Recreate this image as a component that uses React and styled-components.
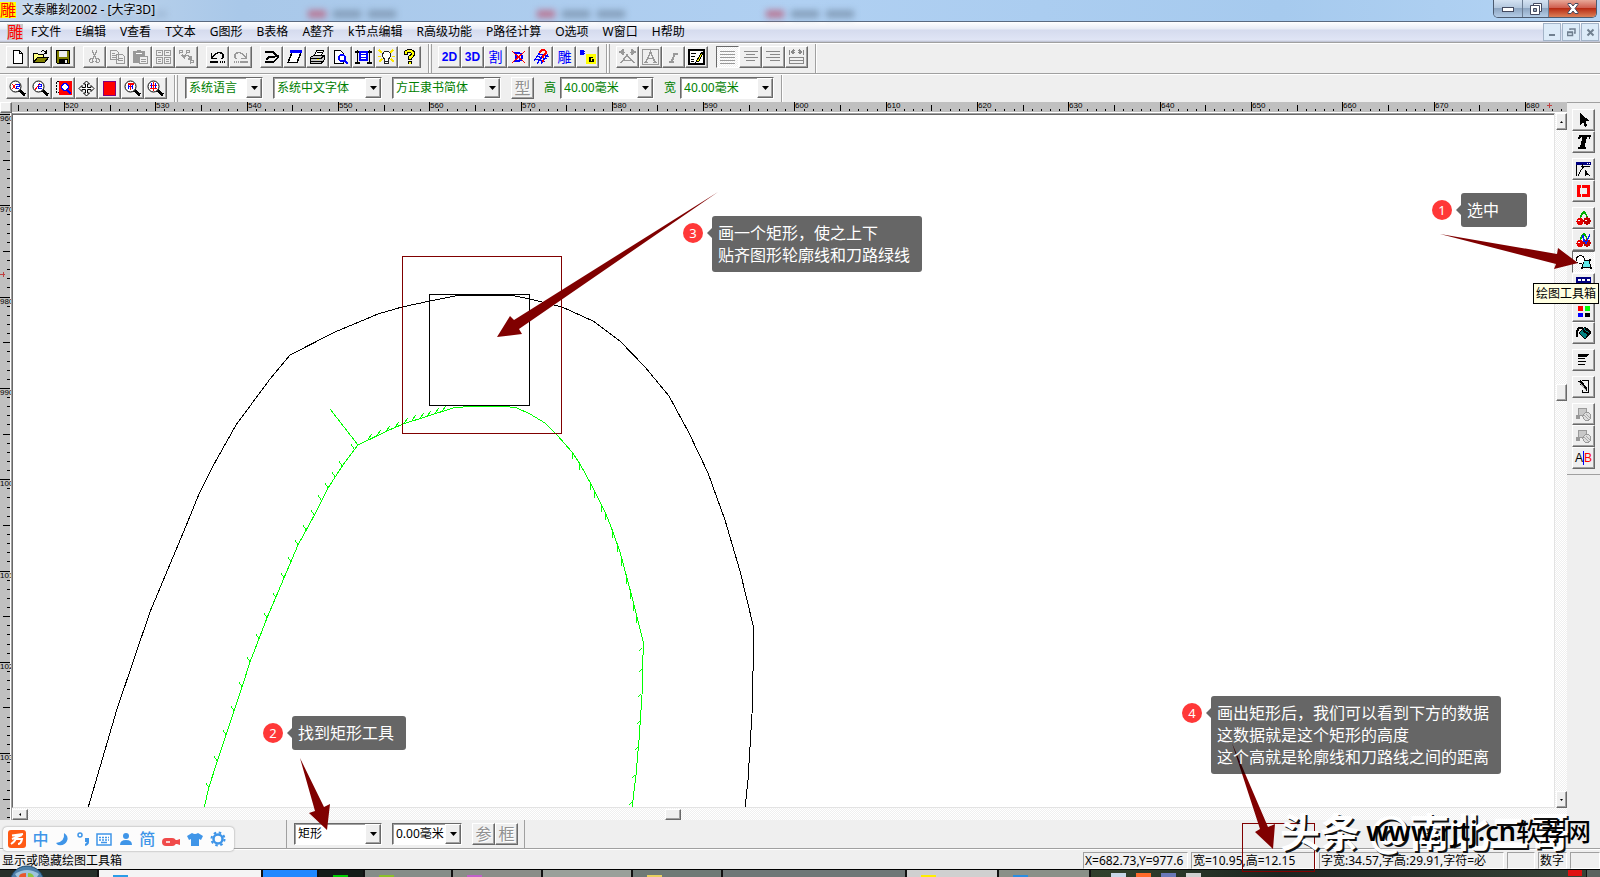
import React from "react";
import styled, { createGlobalStyle, css } from "styled-components";

const UI_FONT = `"Noto Sans", "Noto Sans CJK SC", sans-serif`;
const MAROON = "#800000";
const GREEN = "#00ff00";

const MENUS = [
  "F文件",
  "E编辑",
  "V查看",
  "T文本",
  "G图形",
  "B表格",
  "A整齐",
  "k节点编辑",
  "R高级功能",
  "P路径计算",
  "O选项",
  "W窗口",
  "H帮助",
];

const MAIN_TOOLS = [
  [
    ["new", "open", "save"],
    ["cut", "copy", "paste", "tiles", "chain"],
    ["undo", "redo"],
    ["fold", "slant", "print", "preview", "frame", "bulb", "help"],
  ],
  [["t:2D", "t:3D", "t:割", "cross", "weave", "t:雕", "bg"]],
  [
    ["kern", "boxA", "italic", "edit"],
    ["left", "center", "right", "justify"],
  ],
];

const ZOOM_TOOLS = ["zoomX", "zoom2", "zoomSel", "move", "redBox", "zoomPage", "zoomAll"];

const RAIL_TOOLS = [
  ["cursor", "type"],
  ["node", "redFrame"],
  ["cherry", "cherryPen", "shapes", "table"],
  ["colors", "bucket"],
  ["lines"],
  ["door"],
  ["stack", "stack", "ab"],
];

const TITLES = {
  new: "新建",
  open: "打开",
  save: "保存",
  cut: "剪切",
  copy: "复制",
  paste: "粘贴",
  undo: "撤消",
  redo: "重做",
  print: "打印",
  preview: "打印预览",
  help: "帮助",
  shapes: "绘图工具箱",
};

const PRESSED = ["left", "shapes"];

function Lens({ children }) {
  return (
    <>
      <path d="M10 10l6 5" stroke="#000" strokeWidth="3" />
      <circle
        cx="6.500"
        cy="6.500"
        r="5.500"
        fill="#fff"
        stroke="#000"
        shapeRendering="geometricPrecision"
      />
      {children}
    </>
  );
}

function Cherries() {
  return (
    <>
      <path d="M5 10Q6 4 9 2Q12 4 12 9M9 2L7 4" fill="none" stroke="#00b000" strokeWidth="1.600" />
      <circle cx="5" cy="11.500" r="3.600" fill="#e60000" />
      <circle cx="12" cy="11" r="3.600" fill="#c00000" />
      <path d="M3 10.500h2M10 10.500h2" stroke="#fff" />
    </>
  );
}

const ICONS = {
  new: <path d="M4.500 1.500h6l3 3v10h-9zM10.500 1.500v3h3" fill="#fff" stroke="#000" />,
  open: (
    <>
      <path d="M1.500 13.500v-9h4l1 1h5v3" fill="#ffff80" stroke="#000" />
      <path d="M1.500 13.500l4-5h11l-4 5z" fill="#808000" stroke="#000" />
      <path d="M9 3q3-3 5 1M14.500 1v3h-3" fill="none" stroke="#000" />
    </>
  ),
  save: (
    <>
      <path d="M1.500 1.500h13v13h-12l-1-1z" fill="#808000" stroke="#000" />
      <path d="M4 2h8v6H4z" fill="#efefef" />
      <path d="M4 10h9v5H4z" fill="#000" />
      <path d="M10 11h2v3h-2z" fill="#efefef" />
    </>
  ),
  cut: (
    <path
      d="M6 1l4 9M11 1l-4 9M6.500 10a2 2 0 1 0 .5 3zM10.500 10a2 2 0 1 1-.5 3z"
      fill="none"
      stroke="#999"
      strokeWidth="1.200"
    />
  ),
  copy: (
    <path
      d="M1.500 1.500h6l2 2v7h-8zM3 4.500h3M3 6.500h5M3 8.500h5M7.500 5.500h6l2 2v7h-8zM9 9.500h5M9 11.500h5"
      fill="#efefef"
      stroke="#999"
    />
  ),
  paste: (
    <>
      <path d="M1 2h4V1h4v1h4v12H1z" fill="#999" />
      <path d="M4 4.500h6M7.500 7.500h8v7h-8zM9 10.500h5M9 12.500h5" fill="#efefef" stroke="#fff" />
      <path d="M7.500 7.500h8v7h-8zM9 10.500h5M9 12.500h5" fill="none" stroke="#999" />
    </>
  ),
  tiles: (
    <path
      d="M1.500 1.500h6v5h-6zM9.500 1.500h6v5h-6zM1.500 8.500h6v6h-6zM9.500 8.500h6v6h-6zM3 3.500h3M11 3.500h3M3 10.500h3M11 10.500h3M3 12.500h3M11 12.500h3"
      fill="#efefef"
      stroke="#999"
    />
  ),
  chain: (
    <path
      d="M1.500 5V1.500h3v2h-3M8.500 5V1.500h3v2h-3M12.500 15v-3.500h3v2h-3M4 6l2 2 2-2M10 6l3 4M13 7v3h-3M6.500 8v2"
      fill="none"
      stroke="#999"
      strokeWidth="1.500"
    />
  ),
  undo: (
    <>
      <path d="M2.500 4v5.500H8M3 9q5-7 9-5t1 6" fill="none" stroke="#000" strokeWidth="1.500" />
      <path d="M1 13h8M11 13h1M13 13h1M15 13h1" stroke="#000" strokeWidth="2" />
    </>
  ),
  redo: (
    <>
      <path d="M14.500 4v5.500H9M14 9Q9 2 5 4t-1 6" fill="none" stroke="#999" strokeWidth="1.500" />
      <path d="M8 13h8M6 13h1M4 13h1M2 13h1" stroke="#999" strokeWidth="2" />
    </>
  ),
  fold: (
    <>
      <path d="M2 3h8l4 3.500-3 1.500H6l-3 3" fill="none" stroke="#000" strokeWidth="2" />
      <path d="M2 12.500h9l3.500-3.500V7" fill="none" stroke="#000" strokeWidth="2" />
    </>
  ),
  slant: (
    <>
      <path d="M6 3.500h9l-4 10H2z" fill="#fff" stroke="#000" strokeWidth="1.500" />
      <path d="M4 1h12v3H4z" fill="#00f" />
    </>
  ),
  print: (
    <>
      <path d="M5.500 6.500l2-5h7l-2 5z" fill="#fff" stroke="#000" />
      <path d="M1.500 8.500l3-2h11v4l-3 4h-11z" fill="#c8c8c8" stroke="#000" />
      <path d="M2 9.500h10l3-3M2 12.500h10v2M8 3.500h5" fill="none" stroke="#000" />
      <path d="M8 10.500h2" stroke="#ff0" />
    </>
  ),
  preview: (
    <>
      <path d="M2.500 1.500h6l3 3v10h-9z" fill="#fff" stroke="#000" />
      <circle cx="10" cy="9" r="3" fill="#fff" stroke="#00f" strokeWidth="1.500" />
      <path d="M12 11l4 4" stroke="#00f" strokeWidth="2" />
    </>
  ),
  frame: (
    <>
      <path d="M0 3h17M2.500 1v14M14.500 1v14M0 14h5M12 14h5" stroke="#000" strokeWidth="1.500" />
      <path d="M5 3h7v8H5z" fill="#fff" stroke="#00f" strokeWidth="1.500" />
      <path d="M5 5.500h7M5 8.500h7" stroke="#00f" />
    </>
  ),
  bulb: (
    <>
      <path
        d="M1 1l3 3M15 1l-3 3M0 7.500h3M14 7.500h3M1 13l3-3M16 13l-3-3"
        stroke="#ffe800"
        strokeWidth="1.500"
      />
      <path d="M6.500 10Q4 8 4.500 5.500Q6 2 8.500 2Q12 2 12.500 6Q12 9 10.500 10v4h-4z" fill="#fff" stroke="#222" />
      <path d="M6 12.500h5" stroke="#222" />
    </>
  ),
  help: (
    <>
      <path
        d="M5 6V4q0-2 3.500-2t3.500 2.500Q12 7 8.500 8.500V11M8.500 12v3"
        fill="none"
        stroke="#000"
        strokeWidth="4"
      />
      <path
        d="M5 5V4q0-2 3.500-2t3.500 2.500Q12 7 8.500 8.500V10M8.500 13v1.500"
        fill="none"
        stroke="#ff0"
        strokeWidth="2"
      />
    </>
  ),
  cross: (
    <>
      <path d="M6 4h3q3 1 3 4t-3 4H6zM4 4h3M4 12h3" fill="none" stroke="#00f" strokeWidth="2" />
      <path d="M2 2l13 12M15 2L2 14" stroke="#f00" />
    </>
  ),
  weave: (
    <>
      <path
        d="M1 12l6-9M4 15l7-10M8 15l7-10M3 7l11 3M2 10l10 3M6 5l10 3"
        fill="none"
        stroke="#00f"
        strokeWidth="1.200"
      />
      <path d="M7 4q0-3 3-3t3 3l-3 3v2M10 11v2" fill="none" stroke="#f00" strokeWidth="2" />
    </>
  ),
  bg: (
    <>
      <path d="M7 5h10v10H7z" fill="#ff0" />
      <path d="M1 1h4v1h1v1H5v1h1v1H5v1H1z" fill="#00f" />
      <path d="M14 8.500h-3v4h3v-2h-1" fill="none" stroke="#000" strokeWidth="1.500" />
    </>
  ),
  kern: (
    <path
      d="M1 3l3-2v4zM16 3l-3-2v4zM4 3.500h2M11 3.500h2M2 14l6-8 7 8M5 11.500h7"
      fill="none"
      stroke="#999"
      strokeWidth="1.500"
    />
  ),
  boxA: (
    <>
      <path d="M.5.5h16v15H.5z" fill="none" stroke="#999" />
      <path
        d="M4 13L8.500 3 13 13M5.500 9.500h6M2 13.500h4M11 13.500h4"
        fill="none"
        stroke="#999"
        strokeWidth="1.500"
      />
    </>
  ),
  italic: <path d="M10 4l-3 8M8 4.500h5M4 12.500h5" fill="none" stroke="#999" strokeWidth="2" />,
  edit: (
    <>
      <path d="M1 1h15v14H1z" fill="#fff" stroke="#000" strokeWidth="2" />
      <path d="M3 4.500h5M3 7.500h4M3 10.500h3M3 12.500h3" stroke="#000" />
      <path d="M14 3l-5 8-1 2 3-1 4-8z" fill="#ff0" stroke="#000" />
    </>
  ),
  left: <path d="M1 2.500h15M1 5.500h15M1 8.500h15M1 11.500h15M1 14.500h15" stroke="#999" />,
  center: <path d="M2 2.500h14M4 5.500h9M2 8.500h14M4 11.500h9" stroke="#888" />,
  right: <path d="M1 2.500h14M5 5.500h10M1 8.500h14M5 11.500h10" stroke="#888" />,
  justify: (
    <path
      d="M1.500 1v5M15.500 1v5M4 3.500h3M10 3.500h3M6 1L4 3l2 2M11 1l2 2-2 2M1 8.500h15M1 11.500h15M1 14.500h15M1.500 8v7M15.500 8v7"
      fill="none"
      stroke="#888"
      strokeWidth="1.500"
    />
  ),
  zoomX: (
    <Lens>
      <path d="M3 4l4 5M7 4L3 9" stroke="#f00" />
      <path d="M7 4.500h3v2H7.500v2H10" fill="none" stroke="#00f" />
    </Lens>
  ),
  zoom2: (
    <Lens>
      <path d="M3 10l5-7" stroke="#f00" />
      <path d="M6 4.500h3.500v2H6.500v2H10" fill="none" stroke="#00f" />
    </Lens>
  ),
  zoomSel: (
    <>
      <path d="M4 1h13v14H4z" fill="#f00" />
      <path d="M4 1.500H1.500v11H4" fill="none" stroke="#000" strokeDasharray="2 1" />
      <circle cx="10" cy="7" r="3.500" fill="#fff" stroke="#00f" strokeWidth="1.500" />
      <path d="M12 10l4 4" stroke="#00f" strokeWidth="2" />
    </>
  ),
  move: (
    <path
      d="M8.500 1l3 3h-2v3.500h3.500v-2l3 3-3 3v-2H9.500V13h2l-3 3-3-3h2V9.500H4v2l-3-3 3-3v2h3.500V4h-2z"
      fill="#fff"
      stroke="#000"
      shapeRendering="geometricPrecision"
    />
  ),
  redBox: <path d="M2.500 1.500h12v14h-12z" fill="#f00" stroke="#800080" />,
  zoomPage: (
    <Lens>
      <path d="M3.500 4h6" stroke="#f00" strokeWidth="2" />
      <path d="M4.500 5v4M8.500 5v4M4 6.500h5" stroke="#00f" />
      <path d="M6.500 3v7" stroke="#f00" />
    </Lens>
  ),
  zoomAll: (
    <Lens>
      <path d="M6.500 2v9M3 5.500h7M3 8.500h7" stroke="#f00" />
      <path d="M4.500 3v5M8.500 3v5" stroke="#00f" />
    </Lens>
  ),
  cursor: <path d="M5 1v12l3-3 2 5 2.500-1-2-5h4z" fill="#000" />,
  type: <path d="M4 1h12l-1 4h-1l-.5-2H12L9.500 13H11v2H3v-2h2L7.500 3H6L4 5H3z" fill="#000" />,
  node: (
    <>
      <path d="M1 1h15v3H1z" fill="#000080" />
      <path d="M12 2.500h1M14 2.500h1" stroke="#fff" />
      <path d="M1.500 4v11M3 15Q6 8 9 6M6 5.500h9M7.500 3v5" fill="none" stroke="#000" />
      <path d="M10 8v7l2-1.500 3 1.500z" fill="#000" />
    </>
  ),
  redFrame: (
    <path d="M2 2h3v12H2zM7 2h8v12H7v-3h5V5H7zM5 2h1v3H5zM5 11h1v3H5z" fill="#f00" />
  ),
  cherry: <Cherries />,
  cherryPen: (
    <>
      <Cherries />
      <path d="M7 3l4 9 4-10M8.500 10V3" fill="none" stroke="#0020ff" strokeWidth="1.300" />
    </>
  ),
  shapes: (
    <>
      <path d="M8.500 6.500h6l1 7h-8z" fill="#60e8e8" stroke="#000" />
      <circle cx="5.500" cy="5.500" r="4" fill="#fff" stroke="#000" />
      <path d="M14 5h2v2h-2zM6 13h2v2H6zM15 13h2v2h-2z" fill="#000" />
    </>
  ),
  table: (
    <>
      <path d="M1 1h15v6H1z" fill="#000080" />
      <path d="M2.500 4h3M7 4h3M11.500 4h3" stroke="#fff" strokeWidth="2" />
      <path d="M1.500 7v7h14V7M6.500 7v7M11.500 7v7M1 10.500h15" fill="none" stroke="#000080" />
    </>
  ),
  colors: (
    <>
      <path d="M3 3h5v5H3z" fill="#f00" />
      <path d="M10 3h5v5h-5z" fill="#0f0" />
      <path d="M3 10h5v4H3z" fill="#00f" />
      <path d="M10 10h5v4h-5z" fill="#000" />
    </>
  ),
  bucket: (
    <>
      <path d="M10 2l6 5-6 7-6-6z" fill="#008080" stroke="#000" />
      <path d="M10 3l6 5M8 5l6 5" stroke="#000" strokeWidth="2" />
      <path d="M8 3H4L2 6v6" fill="none" stroke="#000" strokeWidth="2" />
    </>
  ),
  lines: (
    <>
      <path d="M3 2h11l-2 3H3z" fill="#000" />
      <path d="M3 6.500h7M3 9.500h8M3 12.500h7" stroke="#000" />
    </>
  ),
  door: (
    <>
      <path d="M7 1.500h6.500v12H7V11" fill="none" stroke="#000" />
      <path d="M3 2l3-1 6 8v3l-5-4z" fill="#000" />
      <path d="M4 3l7 8" stroke="#aaa" />
    </>
  ),
  stack: (
    <>
      <path d="M3.500 2.500h8v7h-8z" fill="#c8c8c8" stroke="#999" />
      <circle cx="12" cy="10.500" r="4" fill="#dedede" stroke="#999" />
      <path d="M9 9l5 5M11 8l4 4" stroke="#aaa" />
      <path d="M1 9h4v4H1z" fill="#999" />
    </>
  ),
};

function ToolIcon({ name }) {
  if (name.startsWith("t:")) {
    const text = name.slice(2);
    return <Glyph $latin={text.length > 1}>{text}</Glyph>;
  }
  if (name === "ab") {
    return (
      <SplitGlyph>
        <span>A</span>
        <span>B</span>
      </SplitGlyph>
    );
  }
  return (
    <svg width="17" height="16" viewBox="0 0 17 16" shapeRendering="crispEdges" aria-hidden="true">
      {ICONS[name]}
    </svg>
  );
}

function Tool({ name }) {
  return (
    <ToolButton
      type="button"
      aria-label={TITLES[name] || name.replace("t:", "")}
      $pressed={PRESSED.includes(name)}
    >
      <ToolIcon name={name} />
    </ToolButton>
  );
}

function Combo({ label, value, width, green }) {
  return (
    <ComboBox $width={width}>
      <ComboSelect aria-label={label} $green={green} defaultValue={value}>
        <option>{value}</option>
      </ComboSelect>
      <ComboArrow>
        <svg width="7" height="4" viewBox="0 0 7 4" aria-hidden="true">
          <path d="M0 0h7L3.500 4z" fill="#000" />
        </svg>
      </ComboArrow>
    </ComboBox>
  );
}

const UNIT = 9.13;

function HorizontalRuler() {
  const ticks = [];
  for (let n = 515; n < 685; n++) {
    const x = Math.round(52 + (n - 520) * UNIT);
    const top = n % 10 === 0 ? 0 : n % 5 === 0 ? 3 : 7;
    ticks.push(<path key={n} d={`M${x + 0.5} ${top}V9`} stroke="#000" />);
    if (n % 10 === 0) {
      ticks.push(
        <text key={`l${n}`} x={x + 1} y="6">
          {n}
        </text>
      );
    }
  }
  return (
    <RulerSvg aria-hidden="true">
      {ticks}
      <path d="M1537.500 1v5M1535 3.500h5" stroke="#c04040" />
    </RulerSvg>
  );
}

function VerticalRuler() {
  const ticks = [];
  for (let n = 960; n < 1038; n++) {
    const y = Math.round(1 + (n - 960) * UNIT);
    const left = n % 10 === 0 ? 0 : n % 5 === 0 ? 3 : 7;
    ticks.push(<path key={n} d={`M${left} ${y + 0.5}H10`} stroke="#000" />);
    if (n % 10 === 0) {
      ticks.push(
        <text key={`l${n}`} x="0" y={y + 7}>
          {n}
        </text>
      );
    }
  }
  return (
    <RulerSvg aria-hidden="true">
      {ticks}
      <path d="M0 161.500h5M3.500 159v5" stroke="#c04040" />
    </RulerSvg>
  );
}

const OUTLINE =
  "88,808 117,709 150,612 186,526 199,494 213,466 236,425 270,379 290,355 335,332 378,314 402,307 430,301 455,296 478,295 510,295 530,299 562,307 593,321 620,341 645,367 669,396 689,433 708,473 725,520 740,571 754,629 752,714 748,780 745,808";
const TOOLPATH =
  "330,409 358,445 387,431 403,424 425,417 453,408 473,406 502,406 517,408 530,414 545,423 557,435 572,452 580,464 592,486 606,514 613,532 620,552 632,597 638,621 643,641 643,655 642,695 639,740 636,775 632,808";
const TOOLPATH_LEFT =
  "358,445 343,465 328,488 315,514 298,545 284,578 267,618 250,662 243,684 234,711 225,738 217,762 209,787 204,808";

const BARBS_TOP = [
  [368, 439],
  [377, 435],
  [386, 431],
  [395, 427],
  [404, 423],
  [412, 420],
  [420, 418],
  [427, 416],
  [435, 413],
  [442, 411],
];
const BARBS_LEFT = [
  [354, 449],
  [342, 466],
  [335, 477],
  [328, 488],
  [321, 500],
  [314, 515],
  [306, 530],
  [298, 545],
  [291, 562],
  [284, 578],
  [276, 598],
  [267, 618],
  [259, 639],
  [250, 662],
  [242, 687],
  [234, 711],
  [226, 735],
  [217, 761],
  [209, 788],
];
const BARBS_RIGHT = [
  [642, 648],
  [642, 669],
  [641, 694],
  [640, 721],
  [638, 747],
  [635, 775],
  [632, 802],
];
const BARBS_ARC = [
  [573, 453],
  [580, 464],
  [591, 484],
  [595, 492],
  [602, 506],
  [606, 514],
  [613, 532],
  [618, 546],
  [622, 560],
  [627, 578],
  [631, 593],
  [634, 605],
  [637, 617],
];

const barbs = (points, dx, dy) => points.map(([x, y]) => `M${x} ${y}l${dx} ${dy}`).join("");

function Drawing() {
  return (
    <DrawingSvg aria-label="大字3D">
      <g transform="translate(-13 -115)" fill="none" shapeRendering="crispEdges">
        <polyline points={OUTLINE} stroke="#000" />
        <polyline points={TOOLPATH} stroke={GREEN} />
        <polyline points={TOOLPATH_LEFT} stroke={GREEN} />
        <path
          d={
            barbs(BARBS_TOP, 4, -5) +
            barbs(BARBS_LEFT, -3, -5) +
            barbs(BARBS_RIGHT, -3, 3) +
            barbs(BARBS_ARC, -1, 6)
          }
          stroke={GREEN}
        />
        <path d="M429.500 294.500h100v111h-100z" stroke="#000" />
        <path d="M402.500 256.500h159v177h-159z" stroke={MAROON} />
      </g>
    </DrawingSvg>
  );
}

function Note({ number, x, y, lines }) {
  return (
    <NoteRow $x={x} $y={y}>
      <NoteNumber>{number}</NoteNumber>
      <NoteBubble>
        {lines.map((line) => (
          <div key={line}>{line}</div>
        ))}
      </NoteBubble>
    </NoteRow>
  );
}

function ImeBar() {
  return (
    <Ime>
      <svg width="18" height="18" viewBox="0 0 18 18" aria-hidden="true">
        <rect width="18" height="18" rx="3" fill="#ff5a14" />
        <path
          d="M4 5.500l11-1.500M9 5Q8 11 3 14M8 9h6q-1 5-4 5M14 5L4 9"
          fill="none"
          stroke="#fff"
          strokeWidth="2"
        />
      </svg>
      <ImeKey type="button">中</ImeKey>
      <svg width="14" height="18" viewBox="0 0 14 18" aria-hidden="true">
        <path d="M9 3q5 3 3 8t-9 4l-2-2q9-1 8-10z" fill="#3f95e8" />
      </svg>
      <svg width="14" height="18" viewBox="0 0 14 18" aria-hidden="true">
        <circle cx="4" cy="5" r="2" fill="none" stroke="#3f95e8" strokeWidth="1.500" />
        <path d="M9 8h4v4q0 3-4 4v-2l2-2H9z" fill="#3f95e8" />
      </svg>
      <svg width="16" height="18" viewBox="0 0 16 18" aria-hidden="true">
        <path d="M1 4h14v11H1z" fill="#fff" stroke="#3f95e8" strokeWidth="1.500" />
        <path d="M3 7.500h10M3 10h10" stroke="#3f95e8" strokeWidth="1.500" strokeDasharray="2 1" />
        <path d="M5 12.500h6" stroke="#3f95e8" strokeWidth="1.500" />
      </svg>
      <svg width="14" height="18" viewBox="0 0 14 18" aria-hidden="true">
        <circle cx="7" cy="6" r="3" fill="#3f95e8" />
        <path d="M1 15q0-5 6-5t6 5z" fill="#3f95e8" />
      </svg>
      <ImeKey type="button">简</ImeKey>
      <svg width="19" height="18" viewBox="0 0 19 18" aria-hidden="true">
        <rect x="0" y="8" width="14" height="8" rx="4" fill="#f04a4a" />
        <path d="M12 10h3l3-1v6l-3-1h-3z" fill="#f04a4a" />
        <path d="M4 12h4" stroke="#fff" strokeWidth="1.500" />
      </svg>
      <svg width="16" height="18" viewBox="0 0 16 18" aria-hidden="true">
        <path d="M5 3q3 2 6 0l5 3-2 4-2-1v7H4V9L2 10 0 6z" fill="#3f95e8" />
      </svg>
      <svg width="16" height="18" viewBox="0 0 16 18" aria-hidden="true">
        <circle cx="8" cy="9" r="4.500" fill="none" stroke="#3f95e8" strokeWidth="2.500" />
        <circle
          cx="8"
          cy="9"
          r="6.500"
          fill="none"
          stroke="#3f95e8"
          strokeWidth="2"
          strokeDasharray="2.500 2.600"
        />
      </svg>
    </Ime>
  );
}

export default function App() {
  return (
    <Desktop>
      <GlobalStyle />
      <TitleBar>
        <Ghosts aria-hidden="true">
          {[0, 1, 2, 3].map((n) => (
            <Ghost key={n} $faint={n === 0}>
              <i />
              <b />
              <b />
            </Ghost>
          ))}
        </Ghosts>
        <AppMark $bg="#ffff00">雕</AppMark>
        <AppTitle>文泰雕刻2002 - [大字3D]</AppTitle>
        <WindowButtons>
          <WindowButton type="button" aria-label="最小化" $width={29}>
            <svg width="12" height="12" viewBox="0 0 12 12">
              <rect x=".5" y="4.500" width="11" height="4" fill="#fff" stroke="#444a60" />
            </svg>
          </WindowButton>
          <WindowButton type="button" aria-label="还原" $width={26}>
            <svg width="12" height="12" viewBox="0 0 12 12">
              <path d="M3.500.5h8v8h-8z" fill="#fff" stroke="#444a60" />
              <path d="M.5 2.500h9v9h-9z" fill="#fff" stroke="#444a60" />
              <path d="M3.500 5.500h3v3h-3z" fill="#9ab" stroke="#444a60" />
            </svg>
          </WindowButton>
          <WindowButton type="button" aria-label="关闭" $width={47} $close>
            <svg width="12" height="11" viewBox="0 0 12 11">
              <path
                d="M1 .5h3l2 2.500 2-2.500h3v1L8 5.500l3 4v1H8L6 8l-2 2.500H1v-1l3-4-3-4z"
                fill="#fff"
                stroke="#444a60"
              />
            </svg>
          </WindowButton>
        </WindowButtons>
      </TitleBar>

      <MenuBar>
        <AppMark $bg="#c8c8c8">雕</AppMark>
        <MenuList>
          {MENUS.map((item) => (
            <MenuItem key={item} type="button">
              {item}
            </MenuItem>
          ))}
        </MenuList>
        <ChildButtons>
          <ChildButton type="button" aria-label="最小化子窗口">
            <svg width="9" height="9" viewBox="0 0 9 9">
              <path d="M1 7h6" stroke="#708090" strokeWidth="2" />
            </svg>
          </ChildButton>
          <ChildButton type="button" aria-label="还原子窗口">
            <svg width="9" height="9" viewBox="0 0 9 9">
              <path
                d="M3 2V1h5v4H7M.5 4.500h5v3h-5zM0 4h6M3 1h5"
                fill="none"
                stroke="#708090"
                strokeWidth="1.500"
              />
            </svg>
          </ChildButton>
          <ChildButton type="button" aria-label="关闭子窗口">
            <svg width="9" height="9" viewBox="0 0 9 9">
              <path d="M1.500 1.500l6 6M7.500 1.500l-6 6" stroke="#708090" strokeWidth="2" />
            </svg>
          </ChildButton>
        </ChildButtons>
      </MenuBar>

      <Toolbar>
        {MAIN_TOOLS.map((section, i) => (
          <ToolSection key={i}>
            {section.map((group) => (
              <ToolGroup key={group[0]}>
                {group.map((name) => (
                  <Tool key={name} name={name} />
                ))}
              </ToolGroup>
            ))}
          </ToolSection>
        ))}
      </Toolbar>

      <Toolbar $last>
        <ToolSection>
          <ToolGroup>
            {ZOOM_TOOLS.map((name) => (
              <Tool key={name} name={name} />
            ))}
          </ToolGroup>
        </ToolSection>
        <FontSection>
          <Combo label="语言" value="系统语言" width={78} green />
          <Combo label="中文字体" value="系统中文字体" width={109} green />
          <Combo label="西文字体" value="方正隶书简体" width={109} green />
          <ToolButton type="button">
            <Muted>型</Muted>
          </ToolButton>
          <Field>
            高
            <Combo label="高" value="40.00毫米" width={94} green />
          </Field>
          <Field>
            宽
            <Combo label="宽" value="40.00毫米" width={94} green />
          </Field>
        </FontSection>
      </Toolbar>

      <Workspace>
        <Sheet>
          <Corner />
          <TopRuler>
            <HorizontalRuler />
          </TopRuler>
          <SideRuler>
            <VerticalRuler />
          </SideRuler>
          <Canvas>
            <Drawing />
          </Canvas>
          <ScrollColumn>
            <ScrollButton type="button" aria-label="向上" $h={17}>
              <svg width="3" height="2" viewBox="0 0 3 2">
                <path d="M0 2h3L1.500 0z" />
              </svg>
            </ScrollButton>
            <Gap $grow={254} />
            <ScrollThumb $h={17} />
            <Gap $grow={391} />
            <ScrollButton type="button" aria-label="向下" $h={17}>
              <svg width="3" height="2" viewBox="0 0 3 2">
                <path d="M0 0h3L1.500 2z" />
              </svg>
            </ScrollButton>
          </ScrollColumn>
          <ScrollRow>
            <ScrollButton type="button" aria-label="向左" $w={16}>
              <svg width="2" height="3" viewBox="0 0 2 3">
                <path d="M2 0v3L0 1.500z" />
              </svg>
            </ScrollButton>
            <Gap $grow={637} />
            <ScrollThumb $w={16} />
            <Gap $grow={886} />
          </ScrollRow>
        </Sheet>
        <Rail>
          {RAIL_TOOLS.map((group, i) => (
            <RailGroup key={i}>
              {group.map((name, j) => (
                <Tool key={j} name={name} />
              ))}
            </RailGroup>
          ))}
        </Rail>
      </Workspace>

      <ShapeBar>
        <ShapeTools>
          <Combo label="图形" value="矩形" width={88} />
          <Combo label="圆角" value="0.00毫米" width={70} />
          <ToolGroup>
            <ToolButton type="button">
              <Muted>参</Muted>
            </ToolButton>
            <ToolButton type="button">
              <Muted>框</Muted>
            </ToolButton>
          </ToolGroup>
        </ShapeTools>
      </ShapeBar>

      <StatusBar>
        <StatusText>显示或隐藏绘图工具箱</StatusText>
        <StatusCell $width={105}>X=682.73,Y=977.6</StatusCell>
        <StatusCell $width={125}>宽=10.95,高=12.15</StatusCell>
        <StatusCell $width={185}>字宽:34.57,字高:29.91,字符=必</StatusCell>
        <StatusCell $width={28} />
        <StatusCell $width={29}>数字</StatusCell>
        <StatusCell $width={30} />
      </StatusBar>

      <Taskbar>
        <Orb viewBox="0 0 36 12" aria-hidden="true">
          <circle cx="18" cy="18" r="17" fill="#4d7fa8" stroke="#1d4a70" />
          <path d="M6 9q12-8 24 0l-2 3H8z" fill="#9ec3dc" />
          <path d="M10 12q0-4 7-4v4z" fill="#e8582c" />
          <path d="M19 8q5 0 6 4h-6z" fill="#8cc63f" />
        </Orb>
        <Task $width={99} $tone="#26302a" />
        <Task $width={164} $tone="#f4f4f4" $spot="#2a9de8" />
        <Task $width={56} $tone="#2088ff" />
        <Task $width={46} $tone="#141c18" $spot="#00d000" />
        <Task $width={88} $tone="#858d88" $spot="#8ac02a" />
        <Task $width={90} $tone="#8a8d88" $spot="#c060c8" />
        <Task $width={90} $tone="#9aa09a" />
        <Task $width={90} $tone="#6f7a76" $spot="#e8d060" />
        <Task $width={184} $tone="#6f7777" />
        <Task $width={92} $tone="#d0d0d0" $spot="#ffee00" />
        <Task $width={92} $tone="#8a9088" $spot="#2a8de0" />
        <Tray>
          <TraySpot $tone="#c8d8e8" />
          <TraySpot $tone="#ff6a2a" />
          <TraySpot $tone="#6a78b8" />
          <TraySpot $tone="#d0d0d0" />
        </Tray>
        <TrayAlert />
        <ShowDesktop />
      </Taskbar>

      <Overlay>
        <ArrowSvg aria-hidden="true">
          <g fill={MAROON}>
            <path d="M718 192L514 320l-4-4-13 21 25-3-3-5z" />
            <path d="M1440 234l116 30-2 5 24-6-20-15-1 6z" />
            <path d="M300 758l15 53-6 2 18 17 3-26-6 3z" />
            <path d="M1232 743l28 86-5 3 18 17 2-25-7 3z" />
          </g>
          <path
            d="M1242.500 823.500h72v48h-72z"
            fill="none"
            stroke={MAROON}
            shapeRendering="crispEdges"
          />
        </ArrowSvg>
        <Note number={1} x={1432} y={193} lines={["选中"]} />
        <Note number={2} x={263} y={716} lines={["找到矩形工具"]} />
        <Note number={3} x={683} y={216} lines={["画一个矩形，使之上下", "贴齐图形轮廓线和刀路绿线"]} />
        <Note
          number={4}
          x={1182}
          y={696}
          lines={[
            "画出矩形后，我们可以看到下方的数据",
            "这数据就是这个矩形的高度",
            "这个高就是轮廓线和刀路线之间的距离",
          ]}
        />
        <Tooltip role="tooltip">绘图工具箱</Tooltip>
        <ImeBar />
        <AuthorMark>头条 @南北二哥</AuthorMark>
        <SiteMark>
          <b>www.rjtj.cn</b>软荐网
        </SiteMark>
      </Overlay>
    </Desktop>
  );
}

const GlobalStyle = createGlobalStyle`
  * {
    box-sizing: border-box;
  }
  body {
    margin: 0;
    overflow: hidden;
    font-family: ${UI_FONT};
    font-size: 12px;
    line-height: 16px;
    color: #000;
  }
  button, select {
    font: inherit;
    color: inherit;
    margin: 0;
    padding: 0;
  }
  svg {
    display: block;
    flex: none;
  }
`;

const raised = css`
  border: 1px solid;
  border-color: #fff #696969 #696969 #fff;
  box-shadow: inset -1px -1px 0 #a0a0a0;
`;

const dither = css`
  background: repeating-conic-gradient(#efefef 0 25%, #fff 0 50%) 0 0 / 2px 2px;
`;

const Desktop = styled.div`
  position: relative;
  height: 100vh;
  display: flex;
  flex-direction: column;
  background: #efefef;
  overflow: hidden;
`;

const TitleBar = styled.header`
  position: relative;
  flex: none;
  height: 22px;
  display: flex;
  align-items: center;
  gap: 6px;
  padding-bottom: 1px;
  border-bottom: 1px solid #5a6a80;
  background: linear-gradient(90deg, #c6d8ec, #a9c8e9 15%, #b0d0f2 50%, #a6caee 80%, #b4d4f4);
`;

const Ghosts = styled.div`
  position: absolute;
  inset: 0;
  display: flex;
  padding-left: 79px;
  overflow: hidden;
  filter: blur(3px);
`;

const Ghost = styled.div`
  flex: none;
  width: 229px;
  display: flex;
  align-items: center;
  gap: 7px;
  padding-top: 6px;
  opacity: ${(p) => (p.$faint ? 0.3 : 1)};

  i {
    width: 18px;
    height: 8px;
    background: #b87a98;
  }
  b {
    width: 28px;
    height: 8px;
    background: #86a0bc;
  }
`;

const AppMark = styled.span`
  position: relative;
  width: 16px;
  height: 16px;
  line-height: 16px;
  font-size: 16px;
  text-align: center;
  color: #f00;
  background: ${(p) => p.$bg};
`;

const AppTitle = styled.h1`
  position: relative;
  flex: 1;
  margin: 0;
  font-size: 12px;
  font-weight: 400;
  text-shadow: 0 0 5px #fff;
`;

const WindowButtons = styled.div`
  position: relative;
  align-self: flex-start;
  display: flex;
  margin-right: 3px;
  border: 1px solid #4c5b70;
  border-top: 0;
  border-radius: 0 0 5px 5px;
  overflow: hidden;
`;

const WindowButton = styled.button`
  width: ${(p) => p.$width}px;
  height: 17px;
  display: flex;
  align-items: center;
  justify-content: center;
  border: 0;
  border-right: ${(p) => (p.$close ? 0 : "1px solid #6b7c92")};
  background: ${(p) =>
    p.$close
      ? "linear-gradient(#e8a898, #d06050 45%, #b82c14 50%, #dc8058)"
      : "linear-gradient(#d4e2f2, #b4c8de 45%, #8ea6c2 50%, #b4cce6)"};
`;

const MenuBar = styled.nav`
  flex: none;
  height: 21px;
  display: flex;
  align-items: center;
  gap: 8px;
  padding-left: 7px;
  border-bottom: 1px solid #a0a0a0;
  background: linear-gradient(#fff, #e8ecf6 35%, #d5dbee 40%, #e0e5f5 90%, #b8bccc);
`;

const MenuList = styled.div`
  flex: 1;
  display: flex;
  gap: 14px;
`;

const MenuItem = styled.button`
  border: 0;
  background: none;
  white-space: nowrap;
`;

const ChildButtons = styled.div`
  display: flex;
  gap: 1px;
  padding-right: 1px;
`;

const ChildButton = styled.button`
  width: 18px;
  height: 18px;
  display: flex;
  align-items: center;
  justify-content: center;
  border: 1px solid #a3b4c8;
  background: #dcebf8;
`;

const Toolbar = styled.div`
  flex: none;
  height: ${(p) => (p.$last ? 28 : 31)}px;
  display: flex;
  border-top: 1px solid #fff;
  border-bottom: ${(p) => (p.$last ? 0 : "1px solid #a0a0a0")};
`;

const ToolSection = styled.div`
  display: flex;
  gap: 8px;
  padding: 2px 7px 3px 6px;
  border-right: 1px solid #a0a0a0;
  box-shadow: 1px 0 0 #fff;

  & + & {
    margin-left: 2px;
    border-left: 1px solid #a0a0a0;
  }
`;

const ToolGroup = styled.div`
  display: flex;
`;

const FontSection = styled(ToolSection)`
  margin-left: 3px;
  padding-left: 7px;
  gap: 10px;
  color: #008000;
  border-left: 1px solid #a0a0a0;
`;

const ToolButton = styled.button`
  width: 23px;
  height: 22px;
  flex: none;
  display: flex;
  align-items: center;
  justify-content: center;
  background: #efefef;
  ${(p) =>
    p.$pressed
      ? css`
          ${dither}
          border: 1px solid;
          border-color: #696969 #fff #fff #696969;
        `
      : raised}
`;

const Glyph = styled.span`
  font-family: "Liberation Sans", "Noto Sans CJK SC", sans-serif;
  font-size: ${(p) => (p.$latin ? 12 : 14)}px;
  font-weight: ${(p) => (p.$latin ? 700 : 400)};
  line-height: 16px;
  color: #00f;
`;

const SplitGlyph = styled.span`
  display: flex;
  font-family: "Liberation Sans", sans-serif;
  font-size: 12px;
  line-height: 14px;

  span + span {
    color: #f00;
    border-left: 1px solid #00f;
  }
`;

const Muted = styled.span`
  font-size: 16px;
  color: #909090;
  text-shadow: 1px 1px 0 #fff;
`;

const Field = styled.label`
  display: flex;
  align-items: center;
  gap: 4px;
`;

const ComboBox = styled.span`
  width: ${(p) => p.$width}px;
  height: 22px;
  display: flex;
  background: #fff;
  border: 1px solid;
  border-color: #696969 #fff #fff #696969;
  box-shadow: inset 1px 1px 0 #a0a0a0;
`;

const ComboSelect = styled.select`
  flex: 1;
  min-width: 0;
  appearance: none;
  border: 0;
  padding-left: 3px;
  background: transparent;
  color: ${(p) => (p.$green ? "#008000" : "#000")};
`;

const ComboArrow = styled.span`
  width: 16px;
  display: flex;
  align-items: center;
  justify-content: center;
  background: #efefef;
  pointer-events: none;
  ${raised}
`;

const Workspace = styled.main`
  flex: 1;
  min-height: 0;
  display: flex;
`;

const Sheet = styled.div`
  flex: 1;
  min-width: 0;
  display: grid;
  grid-template-columns: 12px 1fr 12px;
  grid-template-rows: 11px 1fr 12px;
`;

const Corner = styled.div`
  background: #efefef;
  ${raised}
`;

const TopRuler = styled.div`
  grid-column: 2 / 4;
  overflow: hidden;
  background: #c0c0c0;
  border-bottom: 1px solid #fff;
`;

const SideRuler = styled.div`
  grid-row: 2 / 4;
  overflow: hidden;
  background: #c0c0c0;
  border-right: 1px solid #a0a0a0;
  box-shadow: inset -1px 0 0 #fff;
`;

const RulerSvg = styled.svg`
  width: 100%;
  height: 100%;
  shape-rendering: crispEdges;
  font-family: "Liberation Sans", sans-serif;
  font-size: 8px;
`;

const Canvas = styled.div`
  min-width: 0;
  overflow: hidden;
  background: #fff;
  border: 1px solid #696969;
  border-top-color: #a0a0a0;
  border-right-color: #e3e3e3;
  border-bottom-color: #e3e3e3;
`;

const DrawingSvg = styled.svg`
  width: 100%;
  height: 100%;
  border-top: 1px solid #696969;
`;

const ScrollColumn = styled.div`
  display: flex;
  flex-direction: column;
  padding-left: 1px;
  ${dither}
`;

const ScrollRow = styled.div`
  display: flex;
  padding-top: 1px;
  grid-column: 2 / 4;
  ${dither}
`;

const ScrollThumb = styled.div`
  flex: none;
  width: ${(p) => (p.$w ? `${p.$w}px` : "auto")};
  height: ${(p) => (p.$h ? `${p.$h}px` : "auto")};
  background: #efefef;
  ${raised}
`;

const ScrollButton = styled.button`
  flex: none;
  width: ${(p) => (p.$w ? `${p.$w}px` : "auto")};
  height: ${(p) => (p.$h ? `${p.$h}px` : "auto")};
  display: flex;
  align-items: center;
  justify-content: center;
  background: #efefef;
  ${raised}
`;

const Gap = styled.div`
  flex: ${(p) => p.$grow} 1 0;
`;

const Rail = styled.aside`
  width: 33px;
  flex: none;
  align-self: flex-start;
  display: flex;
  flex-direction: column;
  align-items: center;
  gap: 5px;
  padding: 6px 0 5px;
  border-top: 1px solid #a0a0a0;
  border-bottom: 1px solid #a0a0a0;
`;

const RailGroup = styled.div`
  display: flex;
  flex-direction: column;
`;

const ShapeBar = styled.div`
  flex: none;
  height: 29px;
  display: flex;
  padding-left: 286px;
  border-bottom: 1px solid #a0a0a0;
`;

const ShapeTools = styled.div`
  display: flex;
  align-items: center;
  gap: 10px;
  padding: 0 6px 0 7px;
  border-left: 1px solid #a0a0a0;
  border-right: 1px solid #a0a0a0;
`;

const StatusBar = styled.footer`
  flex: none;
  height: 20px;
  display: flex;
  align-items: center;
  gap: 3px;
  padding-top: 2px;
  border-top: 1px solid #fff;
`;

const StatusText = styled.span`
  flex: 1;
  padding-left: 2px;
`;

const StatusCell = styled.span`
  width: ${(p) => p.$width}px;
  height: 17px;
  padding-left: 1px;
  overflow: hidden;
  white-space: nowrap;
  border: 1px solid;
  border-color: #a0a0a0 #fff #fff #a0a0a0;
`;

const Taskbar = styled.div`
  position: relative;
  flex: none;
  height: 8px;
  display: flex;
  border-top: 1px solid #000;
  background: linear-gradient(90deg, #1a201c, #30402c 70%, #1c2420 80%, #384438);
`;

const Orb = styled.svg`
  position: absolute;
  left: 9px;
  bottom: 0;
  width: 36px;
  height: 12px;
`;

const Task = styled.div`
  width: ${(p) => p.$width}px;
  display: flex;
  padding-left: 14px;
  border-right: 2px solid #111;
  background: ${(p) => p.$tone};

  &::before {
    content: "";
    width: 15px;
    height: 2px;
    align-self: flex-end;
    background: ${(p) => p.$spot || "transparent"};
  }
`;

const Tray = styled.div`
  flex: 1;
  display: flex;
  align-items: flex-end;
  gap: 10px;
  padding-left: 20px;
`;

const TraySpot = styled.span`
  width: 15px;
  height: 4px;
  background: ${(p) => p.$tone};
`;

const TrayAlert = styled.span`
  width: 14px;
  height: 6px;
  margin-right: 4px;
  background: #e01010;
`;

const ShowDesktop = styled.span`
  width: 14px;
  background: #5a6460;
  border-left: 1px solid #111;
`;

const Overlay = styled.div`
  position: absolute;
  inset: 0;
  overflow: hidden;
  pointer-events: none;
`;

const ArrowSvg = styled.svg`
  width: 100%;
  height: 100%;
`;

const NoteRow = styled.div`
  position: absolute;
  left: ${(p) => p.$x}px;
  top: ${(p) => p.$y}px;
  display: flex;
  align-items: flex-start;
  gap: 9px;
`;

const NoteNumber = styled.span`
  width: 20px;
  height: 20px;
  margin-top: 7px;
  border-radius: 50%;
  background: #ff3838;
  color: #fff;
  font-size: 13px;
  line-height: 20px;
  text-align: center;
`;

const NoteBubble = styled.div`
  position: relative;
  min-width: 66px;
  padding: 5px 12px 7px 6px;
  border-radius: 3px;
  background: rgba(0, 0, 0, 0.6);
  color: #fff;
  font-family: "Noto Sans CJK SC", sans-serif;
  font-size: 16px;
  line-height: 22px;
  white-space: nowrap;

  &::before {
    content: "";
    position: absolute;
    right: 100%;
    top: 12px;
    border: 5px solid transparent;
    border-left: 0;
    border-right-color: rgba(0, 0, 0, 0.6);
  }
`;

const Tooltip = styled.div`
  position: absolute;
  right: 1px;
  top: 283px;
  padding: 2px 2px 1px 2px;
  border: 1px solid #000;
  background: #ffffe1;
`;

const Ime = styled.div`
  position: absolute;
  left: 3px;
  top: 827px;
  width: 231px;
  height: 24px;
  display: flex;
  align-items: center;
  justify-content: space-between;
  padding: 0 8px 0 5px;
  border-radius: 4px;
  background: #fcfcfc;
  box-shadow: 0 0 2px #888;
`;

const ImeKey = styled.button`
  border: 0;
  background: none;
  color: #3f95e8;
  font-size: 16px;
  font-weight: 500;
`;

const AuthorMark = styled.div`
  position: absolute;
  left: 1280px;
  top: 804px;
  font-family: "Noto Sans CJK SC", sans-serif;
  font-size: 40px;
  font-weight: 700;
  line-height: 52px;
  white-space: nowrap;
  color: #fff;
  text-shadow: 2px 2px 0 #111;
`;

const SiteMark = styled.div`
  position: absolute;
  right: 9px;
  top: 814px;
  font-size: 25px;
  font-weight: 500;
  line-height: 34px;
  white-space: nowrap;

  b {
    font-size: 27px;
    font-weight: 600;
  }
`;
